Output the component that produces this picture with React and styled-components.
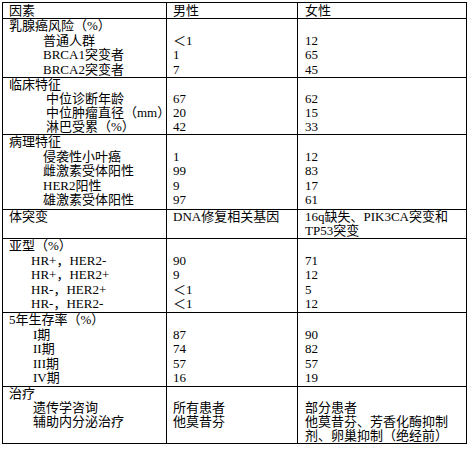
import React from "react";
import styled, { createGlobalStyle } from "styled-components";

const GlobalStyle = createGlobalStyle`
	body {
		margin: 0;
		background: #fff;
	}
`;

const Page = styled.div`
	padding: 2px 0 0 2px;
	width: 468px;
	height: 450px;
	box-sizing: border-box;
	background: #fff;
`;

const Table = styled.table`
	border-collapse: collapse;
	table-layout: fixed;
	width: 464px;
	font-family: "Liberation Serif", "Noto Sans CJK SC", serif;
	font-size: 13px;
	color: #000;
	border: 1px solid #000;
`;

const Col = styled.col`
	width: ${(p) => p.$w}px;
`;

const Row = styled.tr`
	height: ${(p) => p.$h}px;
`;

const Cell = styled.td`
	border: 1px solid #000;
	vertical-align: top;
	padding: 0 0 0 ${(p) => p.$pad}px;
	line-height: ${(p) => p.$lh}px;
	white-space: nowrap;
`;

const Line = styled.div`
	padding-left: ${(p) => p.$indent}px;
	height: ${(p) => p.$lh}px;
`;

// closing full-width bracket: drop its empty right half so it fits the cell
const CloseBracket = styled.span`
	letter-spacing: -5px;
`;

const rows = [
	{
		h: 15,
		lh: 15,
		cols: [["因素"], ["男性"], ["女性"]],
	},
	{
		h: 59,
		lh: 14.5,
		indent: 34,
		cols: [
			["乳腺癌风险（%）", "普通人群", "BRCA1突变者", "BRCA2突变者"],
			["", "＜1", "1", "7"],
			["", "12", "65", "45"],
		],
	},
	{
		h: 56,
		lh: 14,
		indent: 37,
		cols: [
			[
				"临床特征",
				"中位诊断年龄",
				<>
					中位肿瘤直径（mm<CloseBracket>）</CloseBracket>
				</>,
				"淋巴受累（%）",
			],
			["", "67", "20", "42"],
			["", "62", "15", "33"],
		],
	},
	{
		h: 75,
		lh: 14.6,
		indent: 34,
		cols: [
			["病理特征", "侵袭性小叶癌", "雌激素受体阳性", "HER2阳性", "雄激素受体阳性"],
			["", "1", "99", "9", "97"],
			["", "12", "83", "17", "61"],
		],
	},
	{
		h: 28,
		lh: 14,
		indent: 0,
		cols: [
			["体突变"],
			["DNA修复相关基因"],
			["16q缺失、PIK3CA突变和", "TP53突变"],
		],
	},
	{
		h: 74,
		lh: 14.6,
		indent: 22,
		cols: [
			["亚型（%）", "HR+，HER2-", "HR+，HER2+", "HR-，HER2+", "HR-，HER2-"],
			["", "90", "9", "＜1", "＜1"],
			["", "71", "12", "5", "12"],
		],
	},
	{
		h: 73,
		lh: 14.6,
		indent: 24,
		cols: [
			["5年生存率（%）", "I期", "II期", "III期", "IV期"],
			["", "87", "74", "57", "16"],
			["", "90", "82", "57", "19"],
		],
	},
	{
		h: 57,
		lh: 14,
		indent: 24,
		cols: [
			["治疗", "遗传学咨询", "辅助内分泌治疗"],
			["", "所有患者", "他莫昔芬"],
			["", "部分患者", "他莫昔芬、芳香化酶抑制", "剂、卵巢抑制（绝经前）"],
		],
	},
];

const widths = [164, 131, 169];

export default function App() {
	return (
		<Page>
			<GlobalStyle />
			<Table>
				<colgroup>
					{widths.map((w, i) => (
						<Col key={i} $w={w} />
					))}
				</colgroup>
				<tbody>
					{rows.map((row, r) => (
						<Row key={r} $h={row.h}>
							{row.cols.map((lines, c) => (
								<Cell key={c} $pad={c === 2 ? 7 : 6} $lh={row.lh}>
									{lines.map((text, i) => (
										<Line
											key={i}
											$lh={row.lh}
											$indent={c === 0 && i > 0 ? row.indent : 0}
										>
											{text}
										</Line>
									))}
								</Cell>
							))}
						</Row>
					))}
				</tbody>
			</Table>
		</Page>
	);
}
